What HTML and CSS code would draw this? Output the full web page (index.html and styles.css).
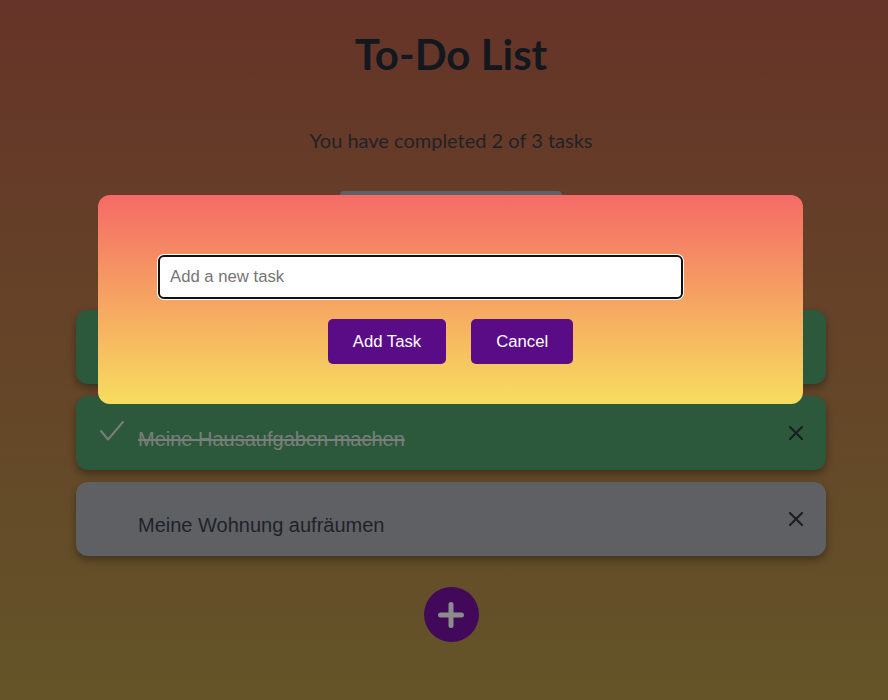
FILE: index.html
```html
<!DOCTYPE html>
<html lang="de">
<head>
<meta charset="utf-8">
<title>To-Do List</title>
<link rel="stylesheet" href="styles.css">
</head>
<body>
<main class="app">
  <h1 class="title">To-Do List</h1>
  <p class="summary">You have completed 2 of 3 tasks</p>
  <div class="progress"></div>
  <ul class="tasks">
    <li class="task done">
      <svg class="check" width="24" height="20" viewBox="0 0 24 20"><path d="M1 10 L8 18.5 L23 1" fill="none" stroke="currentColor" stroke-width="2" stroke-linecap="round" stroke-linejoin="round"/></svg>
      <span class="task-text"></span>
      <svg class="remove" width="14" height="14" viewBox="0 0 14 14"><path d="M1 1 L13 13 M13 1 L1 13" stroke="currentColor" stroke-width="2" stroke-linecap="round"/></svg>
    </li>
    <li class="task done">
      <svg class="check" width="24" height="20" viewBox="0 0 24 20"><path d="M1 10 L8 18.5 L23 1" fill="none" stroke="currentColor" stroke-width="2" stroke-linecap="round" stroke-linejoin="round"/></svg>
      <span class="task-text">Meine Hausaufgaben machen</span>
      <svg class="remove" width="14" height="14" viewBox="0 0 14 14"><path d="M1 1 L13 13 M13 1 L1 13" stroke="currentColor" stroke-width="2" stroke-linecap="round"/></svg>
    </li>
    <li class="task open">
      <span class="check-space"></span>
      <span class="task-text">Meine Wohnung aufräumen</span>
      <svg class="remove" width="14" height="14" viewBox="0 0 14 14"><path d="M1 1 L13 13 M13 1 L1 13" stroke="currentColor" stroke-width="2" stroke-linecap="round"/></svg>
    </li>
  </ul>
  <div class="add-row">
    <button class="add-btn" aria-label="Add">
      <svg width="26" height="26" viewBox="0 0 26 26"><path d="M13 2.5 V23.5 M2.5 13 H23.5" stroke="#fff" stroke-width="5" stroke-linecap="round"/></svg>
    </button>
  </div>
</main>
<div class="overlay">
  <div class="modal">
    <input class="task-input" type="text" placeholder="Add a new task">
    <div class="modal-actions">
      <button class="modal-btn">Add Task</button>
      <button class="modal-btn">Cancel</button>
    </div>
  </div>
</div>
</body>
</html>
```

FILE: styles.css
```css
html, body {
  margin: 0;
  padding: 0;
  height: 100%;
}
body {
  background: linear-gradient(to bottom, #ba5f4a 0%, #b69a4a 100%);
  font-family: "Liberation Sans", Arial, sans-serif;
  min-height: 700px;
  overflow: hidden;
}
.app {
  width: 750px;
  margin-left: 76px;
  padding-top: 29px;
  display: flex;
  flex-direction: column;
  align-items: center;
}
.title {
  font-family: Lato, "Open Sans", sans-serif;
  font-weight: 700;
  font-size: 42px;
  line-height: 50px;
  margin: 0;
  color: #232c3a;
}
.summary {
  font-family: Lato, "Open Sans", sans-serif;
  font-size: 20px;
  line-height: 24px;
  margin: 49px 0 0;
  color: #3c3e45;
}
.progress {
  width: 222px;
  height: 20px;
  margin-top: 39px;
  border-radius: 4px;
  background: #adafb4;
}
.tasks {
  list-style: none;
  margin: 99px 0 0;
  padding: 0;
  width: 750px;
  display: flex;
  flex-direction: column;
  gap: 12px;
}
.task {
  height: 74px;
  box-sizing: border-box;
  border-radius: 12px;
  display: flex;
  align-items: center;
  padding: 0 23px 0 24px;
  box-shadow: 0 4px 8px rgba(0,0,0,0.35);
}
.task.done { background: #50a06c; }
.task.open { background: #adafb4; }
.check {
  color: #dde5df;
  flex: none;
  margin-top: -5px;
}
.check-space {
  width: 24px;
  flex: none;
}
.task-text {
  flex: 1;
  margin-left: 14px;
  margin-top: 12px;
  font-size: 20px;
  line-height: 24px;
}
.task.done .task-text {
  color: #dde5df;
  text-decoration: line-through;
}
.task.open .task-text { color: #38404e; }
.remove {
  color: #2c3440;
  flex: none;
}
.add-row {
  margin-top: 31px;
  display: flex;
  justify-content: center;
}
.add-btn {
  width: 55px;
  height: 55px;
  border-radius: 50%;
  border: none;
  padding: 0;
  background: #7812a4;
  display: flex;
  align-items: center;
  justify-content: center;
}
.overlay {
  position: fixed;
  inset: 0;
  background: rgba(0,0,0,0.45);
}
.modal {
  position: absolute;
  left: 98px;
  top: 195px;
  width: 705px;
  height: 209px;
  box-sizing: border-box;
  padding: 60px 60px 40px;
  border-radius: 12px;
  background: linear-gradient(to bottom, #f56a66 0%, #f7dd5f 100%);
}
.task-input {
  display: block;
  width: 525px;
  height: 44px;
  box-sizing: border-box;
  border: 2px solid #111;
  border-radius: 6px;
  box-shadow: 0 0 0 1px #fff;
  background: #fff;
  padding: 0 10px;
  font-family: "Liberation Sans", Arial, sans-serif;
  font-size: 16.7px;
  outline: none;
}
.task-input::placeholder { color: #757575; }
.modal-actions {
  margin-top: 20px;
  display: flex;
  justify-content: center;
  gap: 25px;
}
.modal-btn {
  height: 45px;
  padding: 0 25px;
  border: none;
  border-radius: 5px;
  background: #5a0c87;
  color: #fff;
  font-family: "Liberation Sans", Arial, sans-serif;
  font-size: 16.7px;
}
```
